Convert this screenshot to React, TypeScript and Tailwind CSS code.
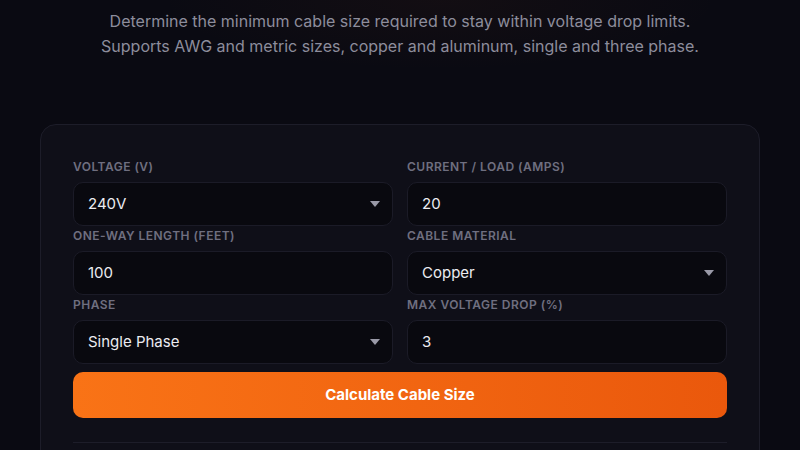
import * as React from 'react';

interface FieldProps {
  label: string;
  value: string;
  select?: boolean;
}

function Caret() {
  return (
    <svg width="10" height="6" viewBox="0 0 10 6" className="flex-shrink-0">
      <path d="M0 0 L10 0 L5 6 Z" fill="#9a9aa8" />
    </svg>
  );
}

function Field({ label, value, select }: FieldProps) {
  return (
    <div className="flex flex-col">
      <label className="text-[12px] leading-4 font-semibold uppercase tracking-[0.04em] text-[#6f6f80] mb-[7px]">
        {label}
      </label>
      <div className="h-11 rounded-[10px] border border-[#1b1b27] bg-[#09090f] pl-[14px] pr-[12px] flex items-center justify-between">
        <span className="text-[15px] text-[#ececf1]">{value}</span>
        {select && <Caret />}
      </div>
    </div>
  );
}

export default function App() {
  const fields: FieldProps[] = [
    { label: 'Voltage (V)', value: '240V', select: true },
    { label: 'Current / Load (Amps)', value: '20' },
    { label: 'One-Way Length (Feet)', value: '100' },
    { label: 'Cable Material', value: 'Copper', select: true },
    { label: 'Phase', value: 'Single Phase', select: true },
    { label: 'Max Voltage Drop (%)', value: '3' },
  ];

  return (
    <div
      className="min-h-screen w-full bg-[#0a0a12] bg-[radial-gradient(ellipse_280px_70px_at_55%_0%,rgba(160,70,25,0.06),transparent)] text-white overflow-hidden"
      style={{ fontFamily: 'Inter, "Noto Sans", sans-serif' }}
    >
      <div className="pt-[9px] text-center text-[16px] leading-[25px] text-[#8d8d9c]">
        <p>Determine the minimum cable size required to stay within voltage drop limits.</p>
        <p>Supports AWG and metric sizes, copper and aluminum, single and three phase.</p>
      </div>

      <div className="mx-10 mt-[65px] rounded-2xl border border-[#1d1d29] bg-[#0f0f18] px-8 pt-[34px] pb-10">
        {/* Inputs */}
        <div className="grid grid-cols-2 gap-x-3.5 gap-y-[2px]">
          {fields.map((f) => (
            <Field key={f.label} {...f} />
          ))}
        </div>

        <button className="mt-2 h-[46px] w-full rounded-[10px] bg-gradient-to-r from-[#f97316] to-[#ea580c] text-[15px] font-bold text-white">
          Calculate Cable Size
        </button>

        {/* Results */}
        <div className="mt-6 border-t border-[#1d1d29] pt-6 h-40" />
      </div>
    </div>
  );
}
